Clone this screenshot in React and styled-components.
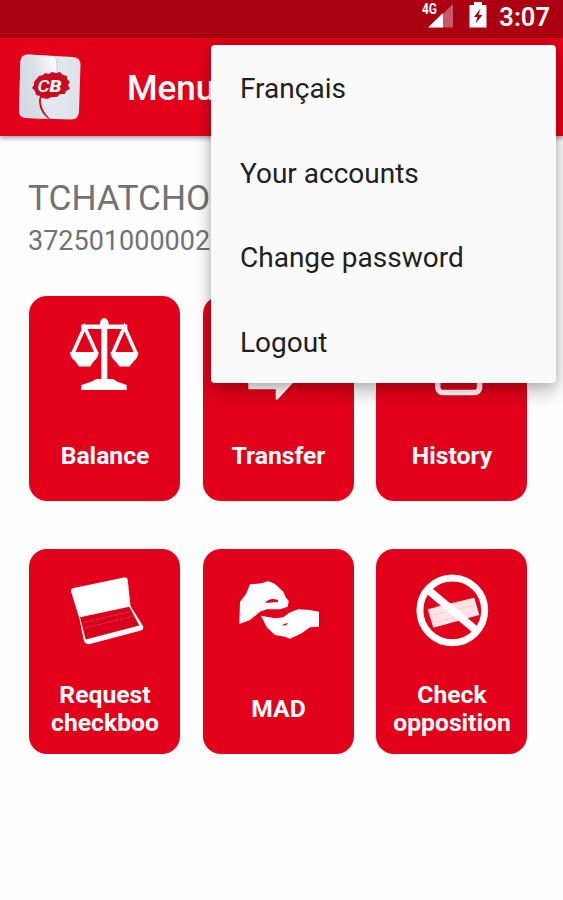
import React from "react";
import styled, { createGlobalStyle } from "styled-components";

const App = () => {
  return (
    <>
      <GlobalStyle />
      <Screen>
        <StatusBar>
          <SignalIcon />
          <BatteryIcon />
          <Clock>3:07</Clock>
        </StatusBar>
        <AppBar>
          <Logo />
          <h1>Menu</h1>
        </AppBar>
        <Account>
          <h2>TCHATCHO</h2>
          <p>372501000002</p>
        </Account>
        <Tiles>
          {tiles.map(({ label, icon }) => (
            <Tile key={label}>
              <TileIcon viewBox="0 0 151 115">{icon}</TileIcon>
              <TileLabel>{label}</TileLabel>
            </Tile>
          ))}
        </Tiles>
        <Menu>
          {menuItems.map((item) => (
            <MenuItem key={item}>{item}</MenuItem>
          ))}
        </Menu>
      </Screen>
    </>
  );
};

const menuItems = ["Français", "Your accounts", "Change password", "Logout"];

//icons
const SignalIcon = () => (
  <svg width="34" height="32" viewBox="0 0 34 32">
    <path d="M8 27.5 32 4v23.5z" fill="#fff" fillOpacity="0.35" />
    <path d="M7 27.5 22 13v14.500z" fill="#fff" />
    <text x="1" y="14" textLength="15" lengthAdjust="spacingAndGlyphs" fill="#fff" fontSize="14" fontWeight="700">
      4G
    </text>
  </svg>
);

const BatteryIcon = () => (
  <svg width="18" height="32" viewBox="0 0 18 32">
    <path d="M5 2h8v3h4.500v22.500H.5V5H5z" fill="#fff" />
    <path d="M11.500 8.500 5 17h3.500l-2 6.500 7-8.500h-4z" fill="#ab0011" />
  </svg>
);

const Logo = () => (
  <svg width="64" height="70" viewBox="18 52 64 70">
    <defs>
      <linearGradient id="leftLeaf" x1="0" y1="0.7" x2="1" y2="0.2">
        <stop offset="0" stopColor="#d3dae3" />
        <stop offset="0.5" stopColor="#d9dfe7" />
        <stop offset="1" stopColor="#fafbfc" />
      </linearGradient>
      <linearGradient id="rightLeaf" x1="0" y1="0" x2="1" y2="0">
        <stop offset="0" stopColor="#c8d0db" />
        <stop offset="0.5" stopColor="#e4e8ee" />
        <stop offset="1" stopColor="#dde2e9" />
      </linearGradient>
    </defs>
    <path d="M28 54.500 73 57q7.500.5 7.500 8L79 112q-.5 7.500-8 7.500L26 118q-7-.5-7-7.500L20.500 61q.5-6.500 7.500-6.500z" fill="url(#rightLeaf)" />
    <path d="M28 54.500 50 56q7 1 7 8v12L41 94v13l5 11.700L26 118q-7-.5-7-7.500L20.500 61q.5-6.500 7.500-6.500z" fill="url(#leftLeaf)" />
    <path d="M57 72v-8q0-5-3-8" fill="none" stroke="#b9c2cf" strokeWidth="0.700" />
    <path d="m39 76 4-1 2-2 4 1 3-2 4 1 4-1 3 3 4 1 0 3 3 3-2 3 2 4-4 2-1 3-5 0-3 3-5 0-5 2-4-1-2 0c-1 9 4 17 12 23-9-4-14-11-14-21l1-4-4-1-1-4-3-3 2-3 0-3z" fill="#cb0c20" />
    <text x="37.500" y="91.500" textLength="24" lengthAdjust="spacingAndGlyphs" fill="#fff" fontSize="17" fontStyle="italic">
      <tspan fontWeight="500">C</tspan>
      <tspan fontWeight="900">B</tspan>
    </text>
  </svg>
);

const tiles = [
  {
    label: "Balance",
    icon: (
      <>
        <path d="M72.300 94V33h-20v-4.500h18.500q0-5.500 4.500-6.500 4.500 1 4.500 6.500h18.500V33h-20v61z" />
        <path d="M52.300 94v-5l10.700-3.500 4-2.500h17.300l3.400 2.500 10 3.500v5z" />
        <path d="M41 56h28.700q-.5 6-4.700 9l-4 5.500H50L46 65q-4.500-3-5-9zM81.500 56h28q-.5 6-4.500 9l-4.500 5.500h-10L86 65q-4-3-4.500-9z" />
        <path d="M44 57 55.600 31 67.500 57M84 57 95.400 31 107 57" fill="none" stroke="#fff" strokeWidth="3.600" />
      </>
    ),
  },
  {
    label: "Transfer",
    icon: <path d="M45.300 70v23.200h27.400V103.500h2L100 76 72.700 60v10z" />,
  },
  {
    label: "History",
    icon: <rect x="61.800" y="40" width="41.800" height="56.500" rx="5" fill="none" stroke="#fff" strokeWidth="5.500" />,
  },
  {
    label: "Request checkboo",
    icon: (
      <>
        <path d="M43.500 39.300 96 28.200q2.300 0 2.700 2.500L101.500 57l12.800 20.500q.5 3-2.300 4L60 95.300q-3.500 0-5-3L50.500 70 42 42.500q-.5-2 1.500-3.200z" />
        <path d="m51 68.300 49.300-10.500 10 18.700-53.600 14z" fill="#d9001b" />
        <path d="m55 73.500 46-11M56 79l49-12" fill="none" stroke="#fff" strokeOpacity="0.2" strokeWidth="1" strokeDasharray="5 1" />
      </>
    ),
  },
  {
    label: "MAD",
    icon: (
      <>
        <path d="M36.300 75 37 52.700l6-7.700 4-9.700 11.700-1L65.300 32 72 35l8.300 7.700 2.400 5.600 3 3.700-1 5.700-7.700 2.600H63.700L57 62.700 47 71z" />
        <path d="m58 66.700 14 2.600 8.300-1 6.700-5 8.300-3L107 61l9 1.700v15l-9 .6-8.300 6L87 89.700l-5-2-10-1.700-8.300-7.700z" />
        <path d="M62 54q5-6 13-3v2zM79 76.700q2-3 6-2.400l-2 2z" fill="#e3001a" />
      </>
    ),
  },
  {
    label: "Check opposition",
    icon: (
      <>
        <path d="m51.700 60.300 46.600-11.600 5 17.300-46 12.700z" fill="#fbe4e6" />
        <path d="m60 58 35-8M57 66l42-10M61 73l35-9" fill="none" stroke="#f5bfc5" strokeWidth="0.700" strokeDasharray="5 2" />
        <path d="m51 40 51 43" stroke="#fff" strokeWidth="8" />
        <circle cx="76.300" cy="61.300" r="32.400" fill="none" stroke="#fff" strokeWidth="7" />
      </>
    ),
  },
];

const GlobalStyle = createGlobalStyle`
  * {
    margin: 0;
    padding: 0;
    box-sizing: border-box;
  }
  body {
    font-family: Roboto, "Liberation Sans", sans-serif;
    background: white;
  }
`;

const Screen = styled.div`
  position: relative;
  width: 563px;
  height: 900px;
  overflow: hidden;
  background: #fefefe;
`;

const StatusBar = styled.div`
  height: 38px;
  display: flex;
  align-items: flex-start;
  justify-content: flex-end;
  gap: 14px;
  padding-right: 13px;
  background: #ab0011;
`;

const Clock = styled.span`
  margin-left: -2px;
  font-size: 25.5px;
  font-weight: 600;
  line-height: 34px;
  color: white;
`;

const AppBar = styled.header`
  height: 98px;
  display: flex;
  align-items: center;
  gap: 45px;
  padding-left: 18px;
  background: #e3001a;
  box-shadow: 0 2px 5px rgba(0, 0, 0, 0.4);
  h1 {
    padding-top: 3px;
    font-size: 35px;
    font-weight: 500;
    color: white;
  }
`;

const Account = styled.section`
  padding: 41px 28px 0;
  color: #737373;
  h2 {
    font-size: 35.2px;
    font-weight: 400;
    line-height: 42px;
  }
  p {
    font-size: 27px;
    line-height: 44px;
  }
`;

const Tiles = styled.main`
  display: grid;
  grid-template-columns: repeat(3, 151px);
  grid-auto-rows: 205px;
  gap: 48.5px 22.5px;
  padding: 32.5px 0 0 29px;
`;

const Tile = styled.div`
  border-radius: 18px;
  background: #e3001a;
`;

const TileIcon = styled.svg`
  display: block;
  width: 151px;
  height: 115px;
  fill: white;
`;

const TileLabel = styled.div`
  height: 90px;
  display: flex;
  align-items: center;
  justify-content: center;
  padding: 0 11px 0 12px;
  font-size: 24.7px;
  font-weight: 700;
  line-height: 28px;
  text-align: center;
  color: white;
`;

const Menu = styled.ul`
  position: absolute;
  top: 45px;
  left: 211px;
  width: 345px;
  height: 338px;
  list-style: none;
  border-radius: 4px;
  background: #fafafa;
  box-shadow: 0 11px 18px rgba(0, 0, 0, 0.2), 0 0 12px rgba(0, 0, 0, 0.2);
`;

const MenuItem = styled.li`
  height: 84.5px;
  display: flex;
  align-items: center;
  padding: 3px 29px 0;
  font-size: 28px;
  color: #212121;
`;

export default App;
